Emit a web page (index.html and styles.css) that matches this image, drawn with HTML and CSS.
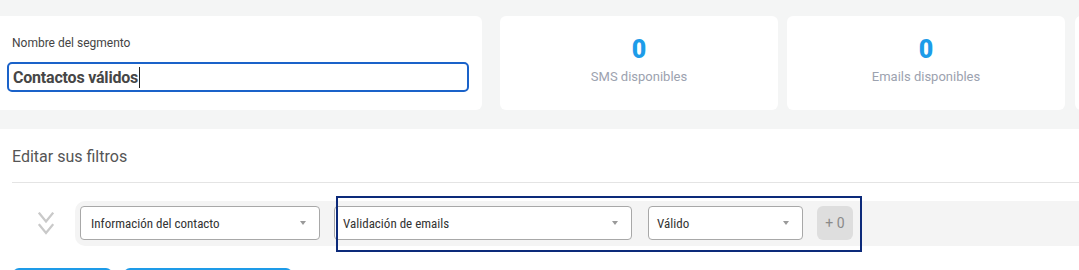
FILE: index.html
```html
<!DOCTYPE html>
<html lang="es">
<head>
<meta charset="utf-8">
<title>Segmento</title>
<link rel="stylesheet" href="styles.css">
</head>
<body>
<div class="top">
  <div class="card name-card">
    <div class="label">Nombre del segmento</div>
    <div class="input"><span class="input-text">Contactos válidos</span><span class="caret"></span></div>
  </div>
  <div class="card stat">
    <div class="num">0</div>
    <div class="stat-label">SMS disponibles</div>
  </div>
  <div class="card stat">
    <div class="num">0</div>
    <div class="stat-label">Emails disponibles</div>
  </div>
  <div class="card stub"></div>
</div>
<div class="main">
  <h2 class="title">Editar sus filtros</h2>
  <div class="rule"></div>
  <div class="filter-row">
    <div class="drag">
      <svg width="16" height="23" viewBox="0 0 16 23" fill="none" stroke="#c9c9c9" stroke-width="2.2" stroke-linecap="square" stroke-linejoin="miter">
        <polyline points="1.5,1.5 8,9.5 14.5,1.5"/>
        <polyline points="1.5,13 8,21 14.5,13"/>
      </svg>
    </div>
    <div class="filters">
      <div class="select s1"><span class="sel-text">Información del contacto</span><span class="arrow"></span></div>
      <div class="select s2"><span class="sel-text">Validación de emails</span><span class="arrow"></span></div>
      <div class="select s3"><span class="sel-text">Válido</span><span class="arrow"></span></div>
      <div class="plus">+ 0</div>
      <div class="highlight"></div>
    </div>
  </div>
  <div class="buttons">
    <div class="btn b1"></div>
    <div class="btn b2"></div>
  </div>
</div>
</body>
</html>
```
FILE: styles.css
```css
html, body {
  margin: 0;
  padding: 0;
  background: #ffffff;
  overflow: hidden;
  font-family: Roboto, "Liberation Sans", sans-serif;
}

.top {
  background: #f4f5f5;
  height: 129px;
  box-sizing: border-box;
  padding-top: 16px;
  display: flex;
  align-items: flex-start;
  gap: 9px;
  width: 1200px;
}

.card {
  background: #ffffff;
  height: 94px;
  border-radius: 6px;
  flex: none;
}

.name-card {
  width: 482px;
  border-radius: 0 6px 6px 0;
  margin-right: 9px;
  box-sizing: border-box;
  padding: 19px 0 0 7px;
}

.label {
  font-size: 12px;
  color: #444444;
  line-height: 16px;
  padding-left: 5px;
  font-stretch: 90%;
}

.input {
  margin-top: 11px;
  width: 462px;
  height: 30px;
  box-sizing: border-box;
  border: 2px solid #1a62c9;
  border-radius: 5px;
  display: flex;
  align-items: center;
  padding-left: 4px;
}

.input-text {
  font-size: 16px;
  font-weight: 700;
  color: #464646;
  letter-spacing: -0.2px;
}

.caret {
  display: inline-block;
  width: 1px;
  height: 21px;
  background: #222;
  margin-left: 1px;
}

.stat {
  width: 278px;
  display: flex;
  flex-direction: column;
  align-items: center;
}

.num {
  margin-top: 20px;
  font-size: 25px;
  font-weight: 900;
  color: #1d9ce9;
  line-height: 28px;
}

.stat-label {
  margin-top: 5px;
  font-size: 13px;
  color: #9ca2af;
  line-height: 16px;
  font-stretch: 92%;
}

.stub {
  width: 60px;
  margin-left: 1px;
}

.main {
  padding-left: 12px;
}

.title {
  margin: 18px 0 0 0;
  font-size: 16px;
  font-weight: 400;
  color: #555555;
  line-height: 20px;
}

.rule {
  margin-top: 15px;
  height: 1px;
  background: #e4e4e4;
}

.filter-row {
  margin-top: 18px;
  display: flex;
  align-items: stretch;
}

.drag {
  width: 63px;
  flex: none;
  display: flex;
  justify-content: center;
  align-items: center;
  padding-left: 4px;
  box-sizing: border-box;
}

.filters {
  position: relative;
  flex: 1;
  background: #f4f4f4;
  border-radius: 10px 0 0 10px;
  height: 45px;
  box-sizing: border-box;
  padding: 5px 0 0 5px;
  display: flex;
  align-items: flex-start;
}

.select {
  height: 34px;
  box-sizing: border-box;
  border: 1px solid #a8a8a8;
  border-radius: 4px;
  background: #ffffff;
  display: flex;
  align-items: center;
  justify-content: space-between;
  padding: 0 13px 0 10px;
  color: #333333;
}

.sel-text {
  font-size: 13px;
  font-stretch: 87.5%;
}

.s1 { width: 240px; margin-right: 14px; }
.s2 { width: 298px; margin-right: 16px; padding-left: 8px; }
.s3 { width: 155px; margin-right: 14px; padding-left: 8px; }

.arrow {
  width: 0;
  height: 0;
  border-left: 3px solid transparent;
  border-right: 3px solid transparent;
  border-top: 4px solid #9a9a9a;
}

.plus {
  width: 36px;
  height: 34px;
  border-radius: 6px;
  background: #dedede;
  color: #8a8a8a;
  font-size: 14px;
  display: flex;
  align-items: center;
  justify-content: center;
}

.highlight {
  position: absolute;
  left: 261px;
  top: -5px;
  width: 526px;
  height: 56px;
  box-sizing: border-box;
  border: 2px solid #0c2a7a;
  pointer-events: none;
}

.buttons {
  margin-top: 22px;
  display: flex;
  gap: 12px;
  padding-left: 1px;
}

.btn {
  height: 36px;
  background: #1e9be8;
  border-radius: 6px;
}

.b1 { width: 99px; }
.b2 { width: 168px; }
```
